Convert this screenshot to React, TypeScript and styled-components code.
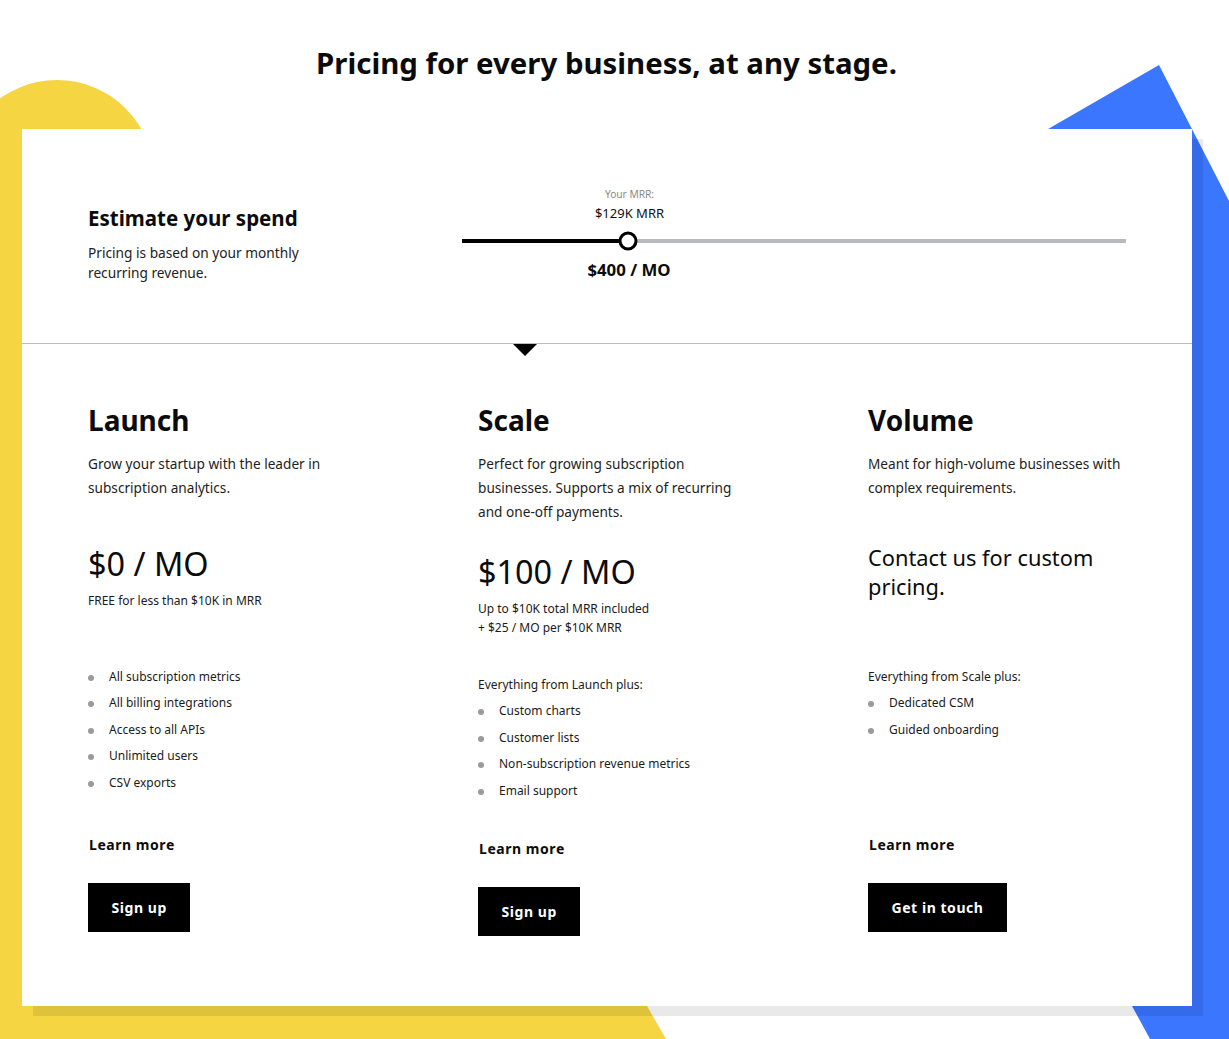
import React from "react";
import styled, { createGlobalStyle } from "styled-components";

const GlobalStyle = createGlobalStyle`
  html, body { margin: 0; padding: 0; background: #ffffff; }
  body { font-family: "Noto Sans", "Open Sans", Arial, sans-serif; color: #1b1b1b; }
  * { box-sizing: border-box; }
`;

const Page = styled.div`
  position: relative;
  width: 1229px;
  height: 1039px;
  overflow: hidden;
  background: #fff;
`;

const Backdrop = styled.svg`
  position: absolute;
  inset: 0;
  width: 1229px;
  height: 1039px;
  z-index: 0;
`;

const Content = styled.div`
  position: relative;
  z-index: 1;
  padding-top: 43px;
`;

const Title = styled.h1`
  margin: 0;
  padding-right: 16px;
  text-align: center;
  font-size: 29.4px;
  line-height: 40px;
  font-weight: 700;
  color: #0b0b0b;
`;

const Card = styled.div`
  margin: 46px 0 0 22px;
  width: 1170px;
  height: 877px;
  background: #ffffff;
  box-shadow: 11px 10px 0 rgba(0, 0, 0, 0.086);
  display: flex;
  flex-direction: column;
`;

const Estimator = styled.section`
  display: flex;
  height: 215px;
  padding: 0 66px;
  border-bottom: 1px solid #bcbcbc;
`;

const EstimateText = styled.div`
  width: 374px;
  padding-top: 75px;
`;

const EstimateHeading = styled.h2`
  margin: 0;
  font-size: 20.5px;
  line-height: 28px;
  font-weight: 700;
  color: #0b0b0b;
`;

const EstimateNote = styled.p`
  margin: 11px 0 0;
  font-size: 13.7px;
  line-height: 20px;
  color: #222;
  width: 230px;
`;

const SliderArea = styled.div`
  flex: 1;
  position: relative;
  padding-top: 110px;
`;

const Track = styled.div`
  position: relative;
  height: 4px;
  background: #b8bbbe;
`;

const Fill = styled.div`
  position: absolute;
  left: 0;
  top: 0;
  bottom: 0;
  background: #000;
`;

const Thumb = styled.div`
  position: absolute;
  top: 2px;
  width: 19px;
  height: 19px;
  border-radius: 50%;
  border: 3px solid #000;
  background: #fff;
  transform: translate(-50%, -50%);
`;

const Bubble = styled.div`
  position: absolute;
  bottom: 21px;
  margin-left: 1.5px;
  transform: translateX(-50%);
  text-align: center;
  white-space: nowrap;
`;

const BubbleLabel = styled.div`
  font-size: 10.2px;
  line-height: 14px;
  color: #8a8a8a;
`;

const BubbleValue = styled.div`
  margin-top: 3px;
  font-size: 13px;
  line-height: 18px;
  color: #111;
`;

const SpendValue = styled.div`
  position: absolute;
  top: 19px;
  margin-left: 1px;
  transform: translateX(-50%);
  white-space: nowrap;
  font-size: 16.8px;
  line-height: 24px;
  font-weight: 700;
  color: #0b0b0b;
`;

const Plans = styled.section`
  position: relative;
  display: grid;
  grid-template-columns: repeat(3, 258px);
  column-gap: 132px;
  padding: 57px 66px 0;

  &::before {
    content: "";
    position: absolute;
    top: 0;
    left: 491px;
    border-left: 12px solid transparent;
    border-right: 12px solid transparent;
    border-top: 12px solid #000;
  }
`;

const Plan = styled.div`
  display: flex;
  flex-direction: column;
  align-items: flex-start;
`;

const PlanName = styled.h3`
  margin: 0;
  font-size: 28px;
  line-height: 38px;
  font-weight: 700;
  color: #0b0b0b;
`;

const PlanDesc = styled.p`
  margin: 13px 0 0;
  min-height: 64px;
  font-size: 13.65px;
  line-height: 24px;
  color: #1e1e1e;
  width: 262px;
`;

const PriceBlock = styled.div`
  margin-top: 26.5px;
  min-height: 121px;
`;

const Price = styled.div`
  font-size: 32.4px;
  line-height: 41.5px;
  color: #0b0b0b;
`;

const Custom = styled.div`
  font-size: 21.8px;
  line-height: 29px;
  color: #0b0b0b;
  width: 240px;
`;

const PriceNote = styled.div`
  margin-top: 7px;
  font-size: 12px;
  line-height: 19px;
  color: #1b1b1b;
`;

const Features = styled.div<{ $min: number }>`
  min-height: ${(p) => p.$min}px;
`;

const FeatureIntro = styled.div`
  font-size: 12px;
  line-height: 26.5px;
  color: #1b1b1b;
`;

const FeatureList = styled.ul`
  list-style: none;
  margin: 0;
  padding: 0;
`;

const Feature = styled.li`
  position: relative;
  padding-left: 21px;
  font-size: 12px;
  line-height: 26.5px;
  color: #1b1b1b;

  &::before {
    content: "";
    position: absolute;
    left: 0;
    top: 11px;
    width: 6px;
    height: 6px;
    border-radius: 50%;
    background: #9b9b9b;
  }
`;

const LearnMore = styled.a`
  margin-top: 12.5px;
  margin-left: 1px;
  font-size: 14px;
  line-height: 20px;
  font-weight: 700;
  letter-spacing: 0.55px;
  color: #0b0b0b;
  text-decoration: none;
`;

const ActionButton = styled.button`
  margin-top: 28px;
  height: 49px;
  padding: 0 23.5px;
  border: none;
  background: #000;
  color: #fff;
  font-family: inherit;
  font-size: 14px;
  font-weight: 700;
  letter-spacing: 0.55px;
  cursor: pointer;
`;

type PlanData = {
  name: string;
  desc: string;
  price?: string;
  custom?: string;
  notes: string[];
  intro?: string;
  features: string[];
  action: string;
  listMin: number;
};

const plans: PlanData[] = [
  {
    name: "Launch",
    desc: "Grow your startup with the leader in subscription analytics.",
    price: "$0 / MO",
    notes: ["FREE for less than $10K in MRR"],
    features: [
      "All subscription metrics",
      "All billing integrations",
      "Access to all APIs",
      "Unlimited users",
      "CSV exports",
    ],
    action: "Sign up",
    listMin: 159,
  },
  {
    name: "Scale",
    desc: "Perfect for growing subscription businesses. Supports a mix of recurring and one-off payments.",
    price: "$100 / MO",
    notes: ["Up to $10K total MRR included", "+ $25 / MO per $10K MRR"],
    intro: "Everything from Launch plus:",
    features: [
      "Custom charts",
      "Customer lists",
      "Non-subscription revenue metrics",
      "Email support",
    ],
    action: "Sign up",
    listMin: 155,
  },
  {
    name: "Volume",
    desc: "Meant for high-volume businesses with complex requirements.",
    custom: "Contact us for custom pricing.",
    notes: [],
    intro: "Everything from Scale plus:",
    features: ["Dedicated CSM", "Guided onboarding"],
    action: "Get in touch",
    listMin: 159,
  },
];

const sliderPosition = 0.25;

export default function App() {
  const pct = `${sliderPosition * 100}%`;
  return (
    <Page>
      <GlobalStyle />
      <Backdrop viewBox="0 0 1229 1039" aria-hidden="true">
        <circle cx="57" cy="177" r="97" fill="#f5d541" />
        <polygon points="0,177 170,177 666,1039 0,1039" fill="#f5d541" />
        <polygon
          points="748,302 1159,65 1229,201 1229,1039 1150,1039"
          fill="#3a76fe"
        />
      </Backdrop>
      <Content>
        <Title>Pricing for every business, at any stage.</Title>
        <Card>
          <Estimator>
            <EstimateText>
              <EstimateHeading>Estimate your spend</EstimateHeading>
              <EstimateNote>
                Pricing is based on your monthly recurring revenue.
              </EstimateNote>
            </EstimateText>
            <SliderArea>
              <Track>
                <Fill style={{ width: pct }} />
                <Bubble style={{ left: pct }}>
                  <BubbleLabel>Your MRR:</BubbleLabel>
                  <BubbleValue>$129K MRR</BubbleValue>
                </Bubble>
                <Thumb style={{ left: pct }} />
                <SpendValue style={{ left: pct }}>$400 / MO</SpendValue>
              </Track>
            </SliderArea>
          </Estimator>
          <Plans>
            {plans.map((p) => (
              <Plan key={p.name}>
                <PlanName>{p.name}</PlanName>
                <PlanDesc>{p.desc}</PlanDesc>
                <PriceBlock>
                  {p.price && <Price>{p.price}</Price>}
                  {p.custom && <Custom>{p.custom}</Custom>}
                  {p.notes.length > 0 && (
                    <PriceNote>
                      {p.notes.map((n) => (
                        <div key={n}>{n}</div>
                      ))}
                    </PriceNote>
                  )}
                </PriceBlock>
                <Features $min={p.listMin}>
                  {p.intro && <FeatureIntro>{p.intro}</FeatureIntro>}
                  <FeatureList>
                    {p.features.map((f) => (
                      <Feature key={f}>{f}</Feature>
                    ))}
                  </FeatureList>
                </Features>
                <LearnMore href="#">Learn more</LearnMore>
                <ActionButton>{p.action}</ActionButton>
              </Plan>
            ))}
          </Plans>
        </Card>
      </Content>
    </Page>
  );
}
